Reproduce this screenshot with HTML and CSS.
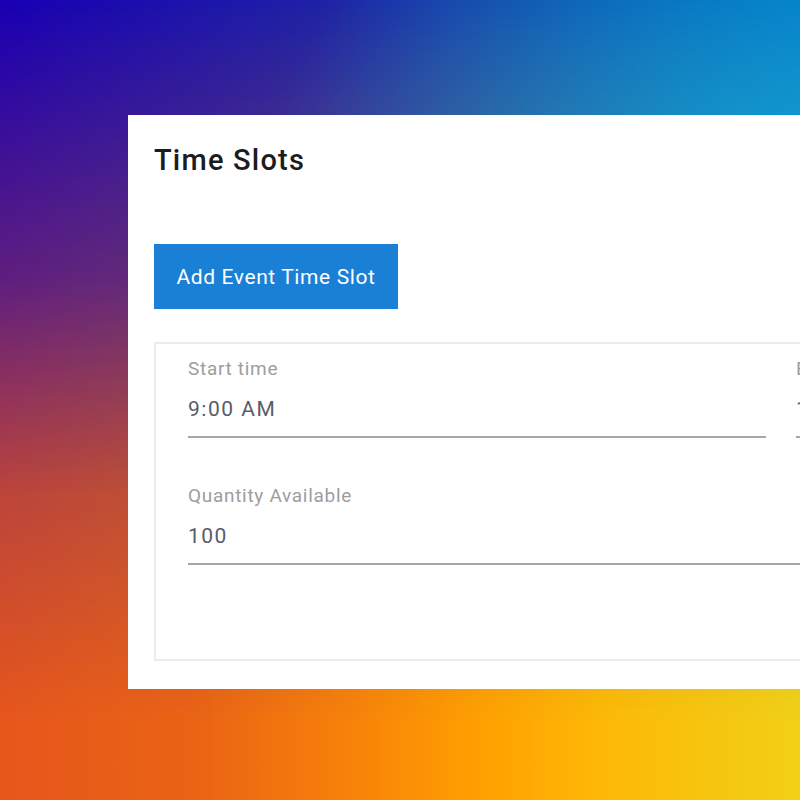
FILE: index.html
```html
<!DOCTYPE html>
<html>
<head>
<meta charset="utf-8">
<link rel="stylesheet" href="styles.css">
</head>
<body>
<div class="bg"></div>
<main class="card">
  <h1 class="title">Time Slots</h1>
  <button class="add-btn" type="button">Add Event Time Slot</button>
  <section class="slot">
    <div class="row">
      <div class="field">
        <div class="label">Start time</div>
        <div class="value">9:00 AM</div>
      </div>
      <div class="field">
        <div class="label">End time</div>
        <div class="value">10:00 AM</div>
      </div>
    </div>
    <div class="row">
      <div class="field wide">
        <div class="label">Quantity Available</div>
        <div class="value">100</div>
      </div>
    </div>
  </section>
</main>
</body>
</html>
```

FILE: styles.css
```css
html, body {
  margin: 0;
  padding: 0;
  width: 800px;
  height: 800px;
  overflow: hidden;
}

body {
  position: relative;
  font-family: Roboto, "Liberation Sans", sans-serif;
  background: linear-gradient(to right, #1800b4 0%, #1e22a6 40%, #1a40a4 60%, #0c62b0 85%, #0870b8 100%);
}

.bg {
  position: absolute;
  inset: 0;
  background: radial-gradient(ellipse 560px 380px at 820px 190px, rgba(0, 165, 235, 0.8) 0%, rgba(0, 165, 235, 0.45) 40%, rgba(0, 165, 235, 0) 100%);
}

body::before {
  content: "";
  position: absolute;
  inset: 0;
  background: linear-gradient(to right, #e6561c 0%, #ea6414 25%, #f88408 45%, #ffa000 60%, #fdb806 75%, #f2d016 100%);
  -webkit-mask-image: linear-gradient(to bottom, rgba(0,0,0,0) 0%, rgba(0,0,0,0.35) 35%, rgba(0,0,0,0.8) 62%, #000 90%);
  mask-image: linear-gradient(to bottom, rgba(0,0,0,0) 0%, rgba(0,0,0,0.35) 35%, rgba(0,0,0,0.8) 62%, #000 90%);
}

.card {
  position: relative;
  z-index: 1;
  box-sizing: border-box;
  margin: 115px 0 0 128px;
  width: 1400px;
  height: 574px;
  background: #ffffff;
  padding: 29px 0 0 26px;
  display: flex;
  flex-direction: column;
  align-items: flex-start;
}

.title {
  margin: 0;
  font-size: 29px;
  line-height: 32px;
  font-weight: 500;
  letter-spacing: 1.2px;
  color: #1c1c1e;
}

.add-btn {
  margin-top: 68px;
  width: 244px;
  height: 65px;
  border: none;
  border-radius: 0;
  background: #1a80d6;
  color: #ffffff;
  font-family: Roboto, "Liberation Sans", sans-serif;
  font-size: 21px;
  font-weight: 400;
  letter-spacing: 0.6px;
  padding: 0;
  display: flex;
  align-items: center;
  justify-content: center;
}

.slot {
  box-sizing: border-box;
  margin-top: 33px;
  width: 1300px;
  height: 319px;
  border: 2px solid #ebecf1;
  padding: 14px 0 0 32px;
  display: flex;
  flex-direction: column;
  gap: 47px;
}

.row {
  display: flex;
  gap: 30px;
}

.field {
  width: 578px;
  padding-bottom: 14px;
  border-bottom: 2px solid #a6a7ad;
}

.field.wide {
  width: 1186px;
}

.label {
  font-size: 19px;
  line-height: 22px;
  letter-spacing: 0.7px;
  color: #9d9d9f;
}

.value {
  margin-top: 16px;
  font-size: 21px;
  line-height: 26px;
  letter-spacing: 1.5px;
  color: #575c67;
}
```
